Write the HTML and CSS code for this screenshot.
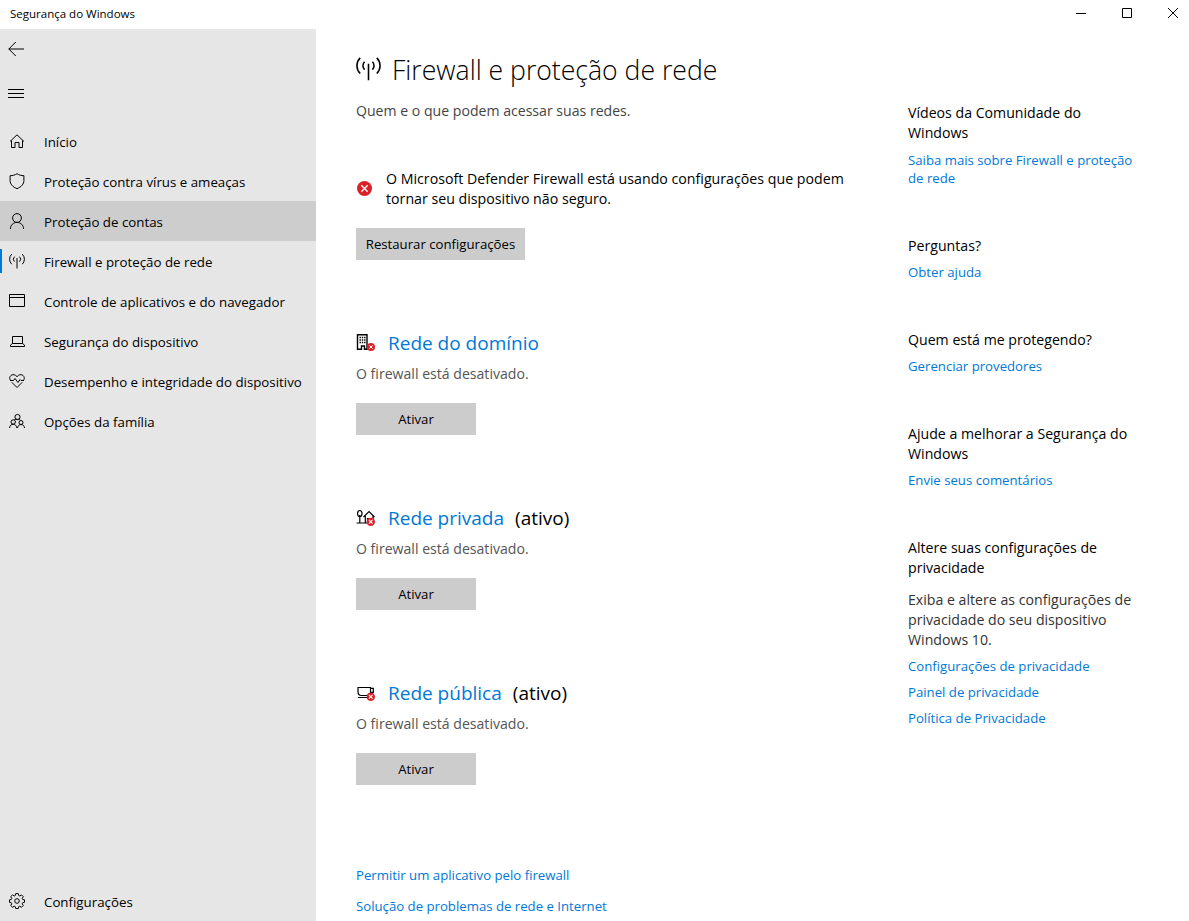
FILE: index.html
```html
<!DOCTYPE html>
<html lang="pt-BR">
<head>
    <meta charset="UTF-8">
    <meta name="viewport" content="width=device-width, initial-scale=1.0">
    <title>Segurança do Windows</title>
    <link rel="stylesheet" href="styles.css">
</head>
<body>
    <svg width="0" height="0" class="defs">
        <symbol id="antenna" viewBox="0 0 16 16">
            <path d="M8 5v10.500M5.500 3.700a3.500 3.500 0 0 0 0 5M10.500 3.700a3.500 3.500 0 0 1 0 5M2.700 1.200a7 7 0 0 0 0 10M13.300 1.200a7 7 0 0 1 0 10"/>
        </symbol>
        <symbol id="error" viewBox="0 0 16 16">
            <circle cx="8" cy="8" r="8" fill="#da2128" stroke="none"/>
            <path d="M4.600 4.600l6.800 6.800M11.400 4.600l-6.800 6.800" stroke="#fff"/>
        </symbol>
    </svg>

    <header class="titlebar">
        <span class="titlebar-text">Segurança do Windows</span>
        <div class="window-buttons">
            <svg viewBox="0 0 46 29"><path d="M15 13.500h10"/></svg>
            <svg viewBox="0 0 46 29"><path d="M15.500 8.500h9v9h-9z"/></svg>
            <svg viewBox="0 0 46 29"><path d="M15 8l10 10M25 8l-10 10"/></svg>
        </div>
    </header>

    <div class="layout">
        <nav class="sidebar">
            <svg class="back" viewBox="0 0 16 16"><path d="M.8 8H16M7.800 1L.8 8l7 7"/></svg>
            <svg class="hamburger" viewBox="0 0 16 16"><path d="M0 4.500h16M0 8.500h16M0 12.500h16"/></svg>

            <ul class="nav-list">
                <li>
                    <svg viewBox="0 0 16 16"><path d="M1 8.500L8 1.800l7 6.700M2.500 7.500v7h3.500v-5h4v5h3.500v-7"/></svg>
                    <span>Início</span>
                </li>
                <li>
                    <svg viewBox="0 0 16 16"><path d="M8 .7c2 1.300 4.200 2 6.900 2v4.800c0 3.500-2.400 6.300-6.900 8.200-4.500-1.900-6.900-4.700-6.900-8.200V2.700C3.800 2.700 6 2 8 .7z"/></svg>
                    <span>Proteção contra vírus e ameaças</span>
                </li>
                <li class="hovered">
                    <svg viewBox="0 0 16 16"><circle cx="8" cy="5" r="4.400"/><path d="M1.400 16c0-3.800 2.900-6.600 6.600-6.600s6.600 2.800 6.600 6.600"/></svg>
                    <span>Proteção de contas</span>
                </li>
                <li class="current">
                    <svg><use href="#antenna"/></svg>
                    <span>Firewall e proteção de rede</span>
                </li>
                <li>
                    <svg viewBox="0 0 16 16"><path d="M.5 1.500h15v12H.5zM.5 4.500h15"/></svg>
                    <span>Controle de aplicativos e do navegador</span>
                </li>
                <li>
                    <svg viewBox="0 0 16 16"><path d="M3.500 3.500h10v7h-10zM3.500 10.500l-2 1.500v1.500h14V12l-2-1.500"/></svg>
                    <span>Segurança do dispositivo</span>
                </li>
                <li>
                    <svg viewBox="0 0 16 16"><path d="M1.200 7C-.6 3.500 3 .2 6.500 2.300L8 3.700l1.500-1.400C13 .2 16.600 3.500 14.800 7M2.800 9.300L8 14.500l5.200-5.200M1 7.500h3.500l1.500-2 3 4 2-3 1 1h3"/></svg>
                    <span>Desempenho e integridade do dispositivo</span>
                </li>
                <li>
                    <svg viewBox="0 0 16 16"><circle cx="8.500" cy="4" r="2.600"/><circle cx="4.200" cy="9" r="2.200"/><circle cx="12" cy="9.500" r="2"/><path d="M.6 15c0-5 7-5 7.200 0M8.600 15c.2-4.600 6.800-4.600 6.900 0M5.200 7c.5-.5 1.500-.7 3.300-.7s2.500.3 3 1"/></svg>
                    <span>Opções da família</span>
                </li>
            </ul>

            <div class="nav-item">
                <svg viewBox="0 0 16 16"><circle cx="8" cy="8" r="2.300"/><path d="M6.700.6h2.600l.4 1.900 1.100.5 1.700-1.100 1.800 1.800L13.200 5.400l.5 1.100 1.800.3v2.500l-1.800.4-.5 1.100 1.100 1.700-1.800 1.800-1.700-1.100-1.100.5-.4 1.800H6.700l-.4-1.800-1.100-.5-1.700 1.100-1.800-1.800 1.100-1.700-.5-1.100-1.800-.4V6.800l1.800-.3.5-1.100L1.700 3.700l1.800-1.800L5.200 3l1.100-.5z"/></svg>
                <span>Configurações</span>
            </div>
        </nav>

        <main>
            <h1>
                <svg><use href="#antenna"/></svg>
                <span>Firewall e proteção de rede</span>
            </h1>
            <p class="subtitle">Quem e o que podem acessar suas redes.</p>

            <div class="alert">
                <svg><use href="#error"/></svg>
                <p>O Microsoft Defender Firewall está usando configurações que podem<br>tornar seu dispositivo não seguro.</p>
            </div>
            <button class="restore">Restaurar configurações</button>

            <section class="network">
                <h2>
                    <svg viewBox="0 0 20 20"><path d="M1.500 1.700h9.500v14.600H8.500v-3.300h-3v3.300h-4z" stroke-width="1.400"/><path d="M3.500 4.500h6M3.500 7h6M3.500 9.500h6" stroke-width="1.300" stroke-dasharray="1.400 .9"/><use href="#error" x="11" y="10" width="8" height="8"/></svg>
                    <a href="#">Rede do domínio</a>
                </h2>
                <p>O firewall está desativado.</p>
                <button>Ativar</button>
            </section>

            <section class="network">
                <h2>
                    <svg viewBox="0 0 20 20"><path d="M3.800 2.500c3 0 3 6.200 0 6.200s-3-6.200 0-6.200zM3.800 7v7.500M.5 15h11M7.500 9l5.500-5.500L18.500 9M9.300 8v7M17 8v4M11.500 15v-4.500h3" stroke-width="1.200"/><use href="#error" x="10.500" y="9.500" width="8.500" height="8.500"/></svg>
                    <a href="#">Rede privada</a>
                    <span>(ativo)</span>
                </h2>
                <p>O firewall está desativado.</p>
                <button>Ativar</button>
            </section>

            <section class="network">
                <h2>
                    <svg viewBox="0 0 20 20"><path d="M2 4.500h12.500v5c0 2-1 3-3 3H5.500c-2 0-3.500-1.500-3.500-4zM14.500 5.300h2.800v4h-2.800M2 14.500h10" stroke-width="1.200"/><use href="#error" x="10.500" y="9.500" width="8.500" height="8.500"/></svg>
                    <a href="#">Rede pública</a>
                    <span>(ativo)</span>
                </h2>
                <p>O firewall está desativado.</p>
                <button>Ativar</button>
            </section>

            <div class="links">
                <a href="#">Permitir um aplicativo pelo firewall</a>
                <a href="#">Solução de problemas de rede e Internet</a>
            </div>
        </main>

        <aside>
            <section class="videos">
                <h3>Vídeos da Comunidade do<br>Windows</h3>
                <a href="#">Saiba mais sobre Firewall e proteção<br>de rede</a>
            </section>
            <section>
                <h3>Perguntas?</h3>
                <a href="#">Obter ajuda</a>
            </section>
            <section>
                <h3>Quem está me protegendo?</h3>
                <a href="#">Gerenciar provedores</a>
            </section>
            <section>
                <h3>Ajude a melhorar a Segurança do<br>Windows</h3>
                <a href="#">Envie seus comentários</a>
            </section>
            <section>
                <h3>Altere suas configurações de<br>privacidade</h3>
                <p>Exiba e altere as configurações de<br>privacidade do seu dispositivo<br>Windows 10.</p>
                <a href="#">Configurações de privacidade</a>
                <a href="#">Painel de privacidade</a>
                <a href="#">Política de Privacidade</a>
            </section>
        </aside>
    </div>
</body>
</html>
```
FILE: styles.css
```css
* {
    box-sizing: border-box;
}

body {
    font-family: "Segoe UI", "Open Sans", "Noto Sans", sans-serif;
    font-size: 13.2px;
    margin: 0;
    height: 921px;
    overflow: hidden;
    background-color: #fff;
    color: #000;
}

h1, h2, h3, p, ul {
    margin: 0;
    padding: 0;
    font-weight: 400;
}

svg {
    display: block;
    flex: none;
    fill: none;
    stroke: #000;
    stroke-width: 1;
}

.defs {
    position: absolute;
}

a {
    color: #0078d7;
    text-decoration: none;
}

button {
    display: block;
    width: 120px;
    height: 32px;
    padding: 0;
    border: none;
    background-color: #ccc;
    color: #000;
    font: inherit;
}

.titlebar {
    display: flex;
    justify-content: space-between;
    height: 29px;
}

.titlebar-text {
    padding-left: 10px;
    font-size: 11.5px;
    line-height: 28px;
}

.window-buttons {
    display: flex;
    margin-right: -10px;
}

.window-buttons svg {
    width: 46px;
    height: 29px;
}

.layout {
    display: flex;
    height: 892px;
}

.sidebar {
    display: flex;
    flex-direction: column;
    width: 316px;
    background-color: #e6e6e6;
}

.back, .hamburger {
    width: 16px;
    height: 16px;
    margin: 12px 0 0 8px;
}

.hamburger {
    margin-top: 28px;
}

.nav-list {
    flex: 1;
    margin-top: 20px;
    list-style: none;
}

.nav-list li, .nav-item {
    display: flex;
    align-items: center;
    gap: 19px;
    height: 40px;
    padding-left: 9px;
    font-size: 13.3px;
}

.nav-list svg, .nav-item svg {
    width: 16px;
    height: 16px;
}

.nav-list span, .nav-item span {
    padding-top: 2px;
}

.nav-list .hovered {
    background-color: #cdcdcd;
}

.nav-list .current {
    background: linear-gradient(#0078d7, #0078d7) 0 center / 2px 24px no-repeat;
}

main {
    width: 592px;
    padding: 21px 0 0 40px;
}

h1 {
    display: flex;
    align-items: center;
    gap: 11px;
    font-size: 26.6px;
    font-weight: 300;
    line-height: 40px;
}

h1 svg {
    width: 25px;
    height: 25px;
    margin-bottom: 3px;
}

.subtitle {
    margin-top: 11px;
    font-size: 14.1px;
    line-height: 20px;
    color: #444;
}

.alert {
    display: flex;
    align-items: center;
    gap: 13px;
    margin-top: 48px;
    font-size: 14.2px;
    line-height: 20px;
}

.alert svg {
    width: 15px;
    height: 15px;
    margin: 0 1px 2px;
    stroke-width: 1.5;
}

.restore {
    width: 169px;
    margin-top: 19px;
}

.network {
    margin-top: 69px;
}

.network h2 {
    display: flex;
    align-items: center;
    gap: 12px;
    font-size: 19px;
    line-height: 28px;
}

.network h2 span {
    margin-left: -1px;
}

.network h2 svg {
    width: 20px;
    height: 20px;
}

.network h2 use {
    stroke-width: 2;
}

.network p {
    margin: 7px 0 19px;
    font-size: 14.1px;
    line-height: 20px;
    color: #555;
}

.links {
    display: flex;
    flex-direction: column;
    gap: 11px;
    margin-top: 80px;
    line-height: 20px;
}

aside {
    width: 240px;
    padding-top: 74px;
}

aside section {
    margin-bottom: 49px;
}

aside h3, aside p {
    font-size: 14.15px;
    line-height: 20px;
}

aside p {
    margin-top: 12px;
    color: #333;
}

aside a {
    display: block;
    margin-top: 7px;
    line-height: 18px;
}

aside .videos a, aside a + a {
    margin-top: 8px;
}
```
